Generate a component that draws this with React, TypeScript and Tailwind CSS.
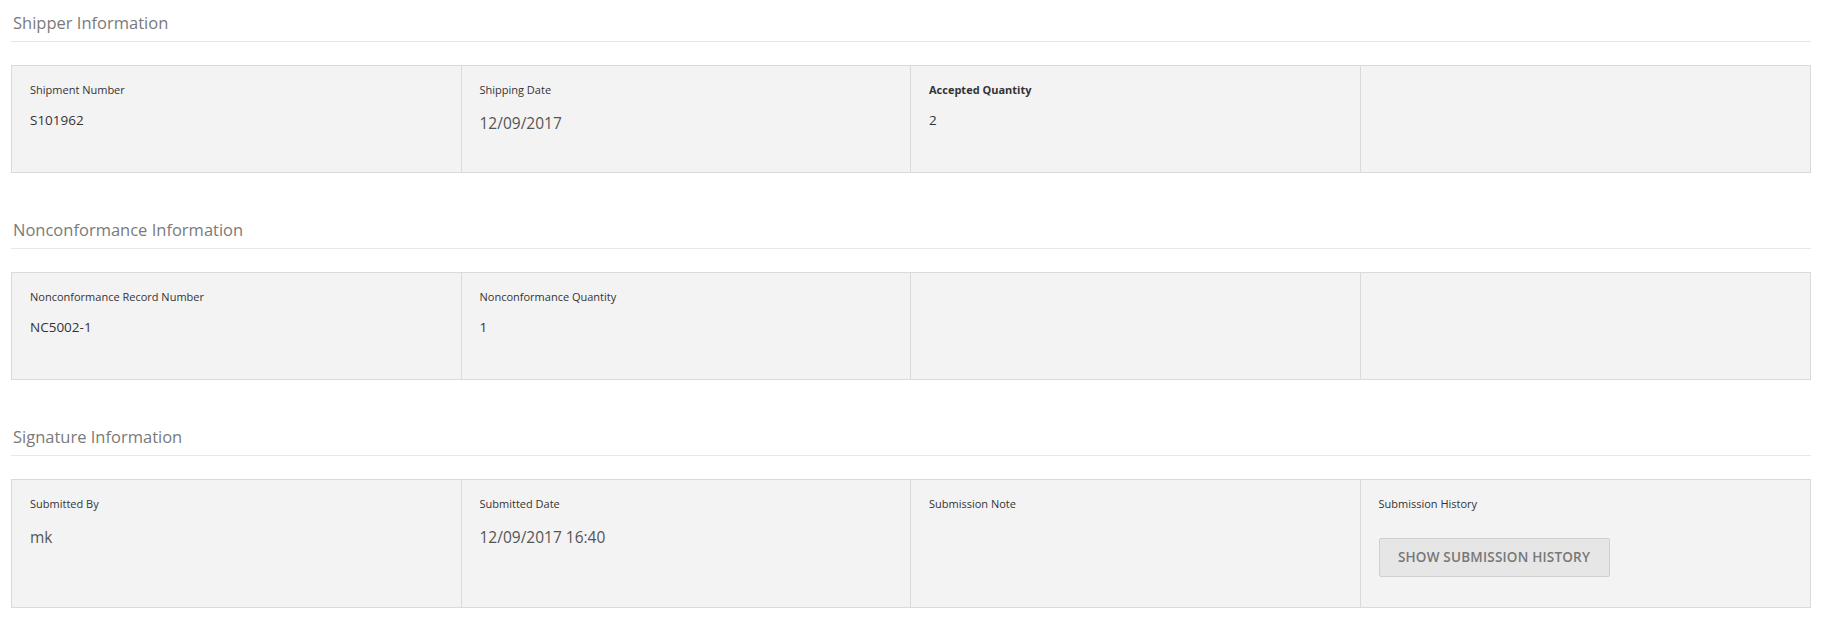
const font = "font-['Open_Sans','Noto_Sans',sans-serif]"

type Field = {
  label?: string
  value?: string
  bold?: boolean
  kind?: "text" | "date" | "button"
}

const sections: { title: string; tall?: boolean; fields: Field[] }[] = [
  {
    title: "Shipper Information",
    fields: [
      { label: "Shipment Number", value: "S101962" },
      { label: "Shipping Date", value: "12/09/2017", kind: "date" },
      { label: "Accepted Quantity", value: "2", bold: true },
      {},
    ],
  },
  {
    title: "Nonconformance Information",
    fields: [
      { label: "Nonconformance Record Number", value: "NC5002-1" },
      { label: "Nonconformance Quantity", value: "1" },
      {},
      {},
    ],
  },
  {
    title: "Signature Information",
    tall: true,
    fields: [
      { label: "Submitted By", value: "mk", kind: "date" },
      { label: "Submitted Date", value: "12/09/2017 16:40", kind: "date" },
      { label: "Submission Note" },
      { label: "Submission History", kind: "button" },
    ],
  },
]

const Cell = ({ field, last }: { field: Field; last: boolean }) => (
  <div
    className={`flex flex-col px-[18px] pt-4 ${
      last ? "" : "border-r border-[#dadada]"
    }`}>
    {field.label && (
      <div
        className={`text-[11px] leading-[15px] text-[#333] ${
          field.bold ? "font-bold" : ""
        }`}>
        {field.label}
      </div>
    )}
    {field.kind === "button" ? (
      <button className="mt-[27px] h-[39px] w-[231px] rounded-[2px] border border-[#cfcfcf] bg-[#e6e6e6] text-[13.5px] font-semibold tracking-[0.2px] text-[#777]">
        SHOW SUBMISSION HISTORY
      </button>
    ) : field.value ? (
      field.kind === "date" ? (
        <div className="mt-[15px] text-[15.5px] leading-[22px] text-[#555]">
          {field.value}
        </div>
      ) : (
        <div className="mt-[12px] text-[13.5px] leading-[22px] text-[#333]">
          {field.value}
        </div>
      )
    ) : null}
  </div>
)

const App = () => {
  return (
    <div className={`${font} min-h-[617px] bg-white pl-[11px] pr-[12px]`}>
      {sections.map((s, i) => (
        <div key={s.title} className={i === 0 ? "pt-[11px]" : "pt-[45px]"}>
          <div className="border-b border-[#e8e8e8] pb-[7px]">
            <h2 className="pl-[2px] text-[16.5px] leading-[23px] font-normal text-[#7a7a7a]">
              {s.title}
            </h2>
          </div>
          <div
            className={`mt-[23px] grid grid-cols-4 border border-[#dadada] bg-[#f3f3f3] ${
              s.tall ? "h-[129px]" : "h-[108px]"
            }`}>
            {s.fields.map((f, j) => (
              <Cell key={j} field={f} last={j === 3} />
            ))}
          </div>
        </div>
      ))}
    </div>
  )
}

export default App
